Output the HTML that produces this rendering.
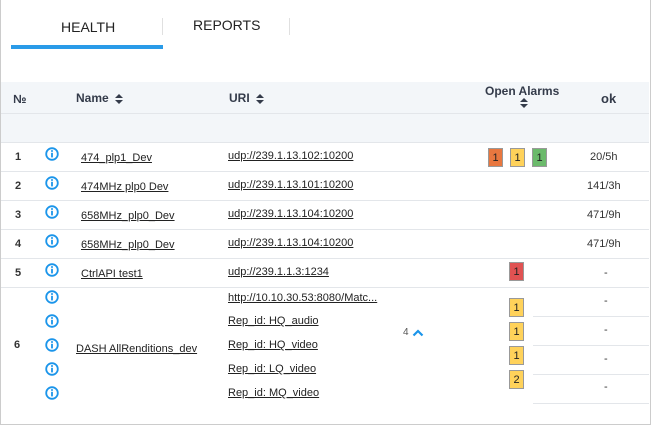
<!DOCTYPE html>
<html><head><meta charset="utf-8"><style>
*{margin:0;padding:0;box-sizing:border-box}
body{width:651px;height:425px;background:#fff;font-family:"Liberation Sans",sans-serif;color:#333;position:relative;overflow:hidden}
.frame{position:absolute;left:0;top:0;width:651px;height:425px;border:1px solid #ccc;border-top:none}
.a{position:absolute;white-space:nowrap}
.u{text-decoration:underline;font-size:11px;color:#222}
.h{font-weight:bold;font-size:12px;color:#343b4a}
.hl{position:absolute;left:1px;width:648px;height:1px;background:#e3e6ea}
.box{position:absolute;width:15px;height:19px;border:1px solid #999;font-size:11px;text-align:center;line-height:19px;color:#222}
.num{font-size:11px;font-weight:bold;color:#333}
.ok{font-size:11px;color:#333}
svg.i{position:absolute;width:14px;height:14px}
</style></head><body>
<div class="frame"></div>
<div class="a" style="left:61px;top:19px;font-size:14px;color:#222">HEALTH</div>
<div class="a" style="left:193px;top:17px;font-size:14px;color:#222">REPORTS</div>
<div class="a" style="left:162px;top:18px;width:1px;height:17px;background:#e0e0e0"></div>
<div class="a" style="left:289px;top:18px;width:1px;height:17px;background:#e0e0e0"></div>
<div class="a" style="left:11px;top:45px;width:152px;height:4px;background:#2a9be8"></div>

<svg width="0" height="0" style="position:absolute"><defs>
<symbol id="ic" viewBox="0 0 14 14"><circle cx="7" cy="7" r="5.8" fill="none" stroke="#1b95ea" stroke-width="1.8"/><rect x="6.1" y="5.8" width="1.8" height="4.6" fill="#1b95ea"/><circle cx="7" cy="4" r="1" fill="#1b95ea"/></symbol>
<symbol id="srt" viewBox="0 0 8 10"><path d="M4 0 L8 4 L0 4Z M4 10 L8 6 L0 6Z" fill="#343b4a"/></symbol>
</defs></svg>

<div class="a" style="left:1px;top:82px;width:648px;height:60px;background:#f3f6f9"></div>
<div class="hl" style="top:113px"></div>
<div class="a h" style="left:13px;top:92px">№</div>
<div class="a h" style="left:76px;top:91px">Name</div>
<svg class="a" style="left:115px;top:94px" width="8" height="10"><use href="#srt"/></svg>
<div class="a h" style="left:229px;top:91px">URI</div>
<svg class="a" style="left:256px;top:94px" width="8" height="10"><use href="#srt"/></svg>
<div class="a h" style="left:485px;top:84px">Open Alarms</div>
<svg class="a" style="left:520px;top:98px" width="8" height="10"><use href="#srt"/></svg>
<div class="a h" style="left:601px;top:91px;font-size:13px">ok</div>

<div class="hl" style="top:142px"></div>
<div class="hl" style="top:171px"></div>
<div class="hl" style="top:200px"></div>
<div class="hl" style="top:229px"></div>
<div class="hl" style="top:258px"></div>
<div class="hl" style="top:287px"></div>
<div class="a" style="left:533px;top:316px;width:116px;height:1px;background:#e3e6ea"></div>
<div class="a" style="left:533px;top:345px;width:116px;height:1px;background:#e3e6ea"></div>
<div class="a" style="left:533px;top:374px;width:116px;height:1px;background:#e3e6ea"></div>
<div class="a" style="left:533px;top:403px;width:116px;height:1px;background:#e3e6ea"></div>

<div class="a num" style="left:15px;top:151px">1</div>
<svg class="i" style="left:45px;top:147px"><use href="#ic"/></svg>
<div class="a u" style="left:81px;top:152px">474_plp1_Dev</div>
<div class="a u" style="left:228px;top:150px">udp://239.1.13.102:10200</div>
<div class="box" style="left:488px;top:148px;background:#e8773f">1</div>
<div class="box" style="left:510px;top:148px;background:#ffd25a">1</div>
<div class="box" style="left:532px;top:148px;background:#6bba6b">1</div>
<div class="a ok" style="left:590px;top:151px">20/5h</div>

<div class="a num" style="left:15px;top:180px">2</div>
<svg class="i" style="left:45px;top:176px"><use href="#ic"/></svg>
<div class="a u" style="left:81px;top:181px">474MHz plp0 Dev</div>
<div class="a u" style="left:228px;top:179px">udp://239.1.13.101:10200</div>
<div class="a ok" style="left:587px;top:180px">141/3h</div>

<div class="a num" style="left:15px;top:209px">3</div>
<svg class="i" style="left:45px;top:205px"><use href="#ic"/></svg>
<div class="a u" style="left:81px;top:210px">658MHz_plp0_Dev</div>
<div class="a u" style="left:228px;top:208px">udp://239.1.13.104:10200</div>
<div class="a ok" style="left:587px;top:209px">471/9h</div>

<div class="a num" style="left:15px;top:238px">4</div>
<svg class="i" style="left:45px;top:234px"><use href="#ic"/></svg>
<div class="a u" style="left:81px;top:239px">658MHz_plp0_Dev</div>
<div class="a u" style="left:228px;top:237px">udp://239.1.13.104:10200</div>
<div class="a ok" style="left:587px;top:238px">471/9h</div>

<div class="a num" style="left:15px;top:267px">5</div>
<svg class="i" style="left:45px;top:263px"><use href="#ic"/></svg>
<div class="a u" style="left:81px;top:268px">CtrlAPI test1</div>
<div class="a u" style="left:228px;top:266px">udp://239.1.1.3:1234</div>
<div class="box" style="left:509px;top:262px;background:#e05252">1</div>
<div class="a ok" style="left:604px;top:267px">-</div>

<div class="a num" style="left:14px;top:339px">6</div>
<svg class="i" style="left:45px;top:290px"><use href="#ic"/></svg>
<svg class="i" style="left:45px;top:314px"><use href="#ic"/></svg>
<svg class="i" style="left:45px;top:338px"><use href="#ic"/></svg>
<svg class="i" style="left:45px;top:362px"><use href="#ic"/></svg>
<svg class="i" style="left:45px;top:386px"><use href="#ic"/></svg>
<div class="a u" style="left:76px;top:343px">DASH AllRenditions_dev</div>
<div class="a u" style="left:228px;top:292px">http://10.10.30.53:8080/Matc...</div>
<div class="a u" style="left:228px;top:315px">Rep_id: HQ_audio</div>
<div class="a u" style="left:228px;top:339px">Rep_id: HQ_video</div>
<div class="a u" style="left:228px;top:363px">Rep_id: LQ_video</div>
<div class="a u" style="left:228px;top:387px">Rep_id: MQ_video</div>
<div class="a" style="left:403px;top:327px;font-size:10px;color:#555">4</div>
<svg class="a" style="left:412px;top:329px" width="12" height="8"><path d="M1.5 6.5 L6 2 L10.5 6.5" fill="none" stroke="#1b95ea" stroke-width="2.2"/></svg>
<div class="box" style="left:509px;top:298px;background:#ffd25a">1</div>
<div class="box" style="left:509px;top:322px;background:#ffd25a">1</div>
<div class="box" style="left:509px;top:346px;background:#ffd25a">1</div>
<div class="box" style="left:509px;top:370px;background:#ffd25a">2</div>
<div class="a ok" style="left:604px;top:295px">-</div>
<div class="a ok" style="left:604px;top:324px">-</div>
<div class="a ok" style="left:604px;top:353px">-</div>
<div class="a ok" style="left:604px;top:381px">-</div>
</body></html>
